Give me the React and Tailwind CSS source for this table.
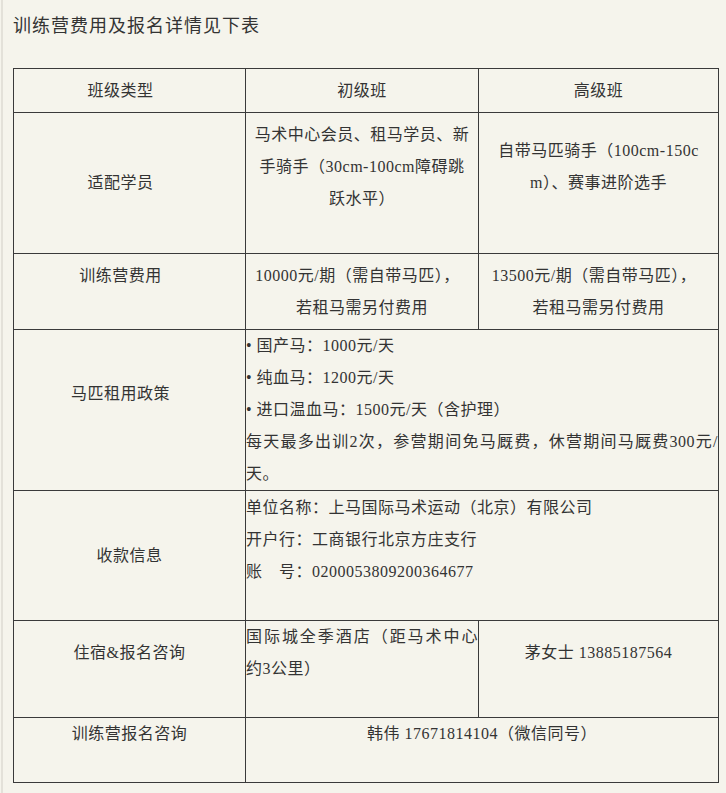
import React from "react";

const font = {
  fontFamily: '"Liberation Serif", "Noto Sans CJK SC", serif',
};

function Blank() {
  return <div className="h-8" />;
}

export default function App() {
  const cell = "border border-[#3a3a3a] align-middle";

  return (
    <div
      className="min-h-screen bg-[#f5f4ec] pl-px text-[#333] text-[16px] leading-8 tracking-[0.5px]"
      style={font}
    >
      <div className="min-h-screen border-l-2 border-[#e3e1d9] pl-[10px] pt-[12px]">
        {/* Title */}
        <h2 className="text-[18px] leading-7 tracking-[1px] font-normal">
          训练营费用及报名详情见下表
        </h2>

        <table className="mt-[28px] w-[705px] table-fixed border-collapse break-all">
          <colgroup>
            <col className="w-[232px]" />
            <col className="w-[233px]" />
            <col className="w-[240px]" />
          </colgroup>
          <tbody>
            {/* Header */}
            <tr className="h-[44px]">
              <td className={`${cell} text-center pr-[18px]`}>班级类型</td>
              <td className={`${cell} text-center px-2`}>初级班</td>
              <td className={`${cell} text-center px-2`}>高级班</td>
            </tr>

            {/* 适配学员 */}
            <tr className="h-[141px]">
              <td className={`${cell} text-center pr-[18px]`}>适配学员</td>
              <td className={`${cell} text-center px-2`}>
                <div>马术中心会员、租马学员、新手骑手（30cm-100cm障碍跳跃水平）</div>
                <Blank />
              </td>
              <td className={`${cell} text-center px-2`}>
                <div>自带马匹骑手（100cm-150cm）、赛事进阶选手</div>
                <Blank />
              </td>
            </tr>

            {/* 训练营费用 */}
            <tr className="h-[76px]">
              <td className={`${cell} text-center pr-[18px]`}>
                <div>训练营费用</div>
                <Blank />
              </td>
              <td className={`${cell} text-center px-2`}>
                10000元/期（需自带马匹），{"\u00a0\u00a0"}
                <br />
                若租马需另付费用
              </td>
              <td className={`${cell} text-center px-2`}>
                13500元/期（需自带马匹），{"\u00a0\u00a0"}
                <br />
                若租马需另付费用
              </td>
            </tr>

            {/* 马匹租用政策 */}
            <tr className="h-[161px]">
              <td className={`${cell} text-center pr-[18px]`}>
                <div>马匹租用政策</div>
                <Blank />
              </td>
              <td colSpan={2} className={`${cell} text-left`}>
                <div>• 国产马：1000元/天</div>
                <div>• 纯血马：1200元/天</div>
                <div>• 进口温血马：1500元/天（含护理）</div>
                <div className="[text-align-last:justify]">
                  每天最多出训2次，参营期间免马厩费，休营期间马厩费300元/
                </div>
                <div>天。</div>
              </td>
            </tr>

            {/* 收款信息 */}
            <tr className="h-[130px]">
              <td className={`${cell} text-center`}>收款信息</td>
              <td colSpan={2} className={`${cell} text-left`}>
                <div>单位名称：上马国际马术运动（北京）有限公司</div>
                <div>开户行：工商银行北京方庄支行</div>
                <div>账　号：0200053809200364677</div>
                <Blank />
              </td>
            </tr>

            {/* 住宿&报名咨询 */}
            <tr className="h-[97px]">
              <td className={`${cell} text-center`}>
                <div>住宿&amp;报名咨询</div>
                <Blank />
              </td>
              <td className={`${cell} text-left`}>
                <div className="[text-align-last:justify]">国际城全季酒店（距马术中心</div>
                <div>约3公里）</div>
                <Blank />
              </td>
              <td className={`${cell} text-center px-2`}>
                <div>茅女士 13885187564</div>
                <Blank />
              </td>
            </tr>

            {/* 训练营报名咨询 */}
            <tr className="h-[65px]">
              <td className={`${cell} text-center`}>
                <div>训练营报名咨询</div>
                <Blank />
              </td>
              <td colSpan={2} className={`${cell} text-center`}>
                <div>韩伟 17671814104（微信同号）</div>
                <Blank />
              </td>
            </tr>
          </tbody>
        </table>
      </div>
    </div>
  );
}
